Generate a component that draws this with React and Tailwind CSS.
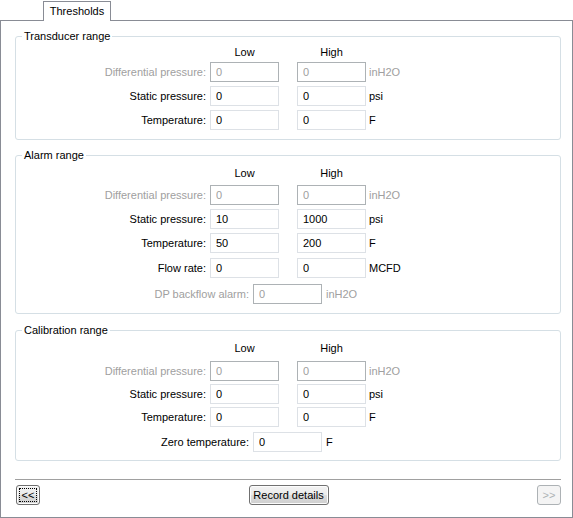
import React from 'react'

const groups = [
  {
    title: 'Transducer range',
    pad: 'pt-[3px] pb-[9px]',
    headGap: 'mb-[3px]',
    rows: [
      { label: 'Differential pressure:', low: '0', high: '0', unit: 'inH2O', disabled: true, mt: '' },
      { label: 'Static pressure:', low: '0', high: '0', unit: 'psi', mt: 'mt-[4px]' },
      { label: 'Temperature:', low: '0', high: '0', unit: 'F', mt: 'mt-[4px]' },
    ],
  },
  {
    title: 'Alarm range',
    pad: 'pt-[5px] pb-[9px]',
    headGap: 'mb-[5px]',
    mt: 'mt-[9px]',
    rows: [
      { label: 'Differential pressure:', low: '0', high: '0', unit: 'inH2O', disabled: true, mt: '' },
      { label: 'Static pressure:', low: '10', high: '1000', unit: 'psi', mt: 'mt-[4px]' },
      { label: 'Temperature:', low: '50', high: '200', unit: 'F', mt: 'mt-[4px]' },
      { label: 'Flow rate:', low: '0', high: '0', unit: 'MCFD', mt: 'mt-[5px]' },
      { label: 'DP backflow alarm:', value: '0', unit: 'inH2O', disabled: true, single: true, mt: 'mt-[6px]' },
    ],
  },
  {
    title: 'Calibration range',
    pad: 'pt-[5px] pb-[8px]',
    headGap: 'mb-[6px]',
    mt: 'mt-[10px]',
    rows: [
      { label: 'Differential pressure:', low: '0', high: '0', unit: 'inH2O', disabled: true, mt: '' },
      { label: 'Static pressure:', low: '0', high: '0', unit: 'psi', mt: 'mt-[3px]' },
      { label: 'Temperature:', low: '0', high: '0', unit: 'F', mt: 'mt-[3px]' },
      { label: 'Zero temperature:', value: '0', unit: 'F', single: true, mt: 'mt-[5px]' },
    ],
  },
]

function Field({ value, disabled }) {
  return (
    <input
      readOnly
      disabled={disabled}
      value={value}
      className={`h-[20px] w-[69px] px-[5px] text-[11px] leading-[18px] outline-none bg-white ${
        disabled ? 'border border-[#adb2b5] text-[#a0a0a0]' : 'border border-[#dde1e6] text-black'
      }`}
    />
  )
}

function Row({ row }) {
  const tone = row.disabled ? 'text-[#a0a0a0]' : 'text-black'
  if (row.single) {
    return (
      <div className={`flex items-center h-[20px] ${row.mt}`}>
        <span className={`w-[233px] text-right ${tone}`}>{row.label}</span>
        <span className="ml-[4px]"><Field value={row.value} disabled={row.disabled} /></span>
        <span className={`ml-[4px] ${tone}`}>{row.unit}</span>
      </div>
    )
  }
  return (
    <div className={`flex items-center h-[20px] ${row.mt}`}>
      <span className={`w-[190px] text-right ${tone}`}>{row.label}</span>
      <span className="ml-[4px]"><Field value={row.low} disabled={row.disabled} /></span>
      <span className="ml-[18px]"><Field value={row.high} disabled={row.disabled} /></span>
      <span className={`ml-[3px] ${tone}`}>{row.unit}</span>
    </div>
  )
}

function Group({ g }) {
  return (
    <fieldset className={`border border-[#d5dfe5] rounded-[3px] ${g.mt || ''}`}>
      <legend className="ml-[6px] px-[2px] leading-[13px] text-black">{g.title}</legend>
      <div className={g.pad}>
        <div className={`flex h-[13px] leading-[13px] text-black ${g.headGap}`}>
          <span className="ml-[194px] w-[69px] text-center">Low</span>
          <span className="ml-[18px] w-[69px] text-center">High</span>
        </div>
        {g.rows.map((r, i) => (
          <Row key={i} row={r} />
        ))}
      </div>
    </fieldset>
  )
}

const btn =
  'h-[20px] border rounded-[3px] text-[11px] flex items-center justify-center'
const btnOn =
  'border-[#707070] text-black bg-[linear-gradient(#f2f2f2,#ebebeb_50%,#dddddd_50%,#cfcfcf)] shadow-[inset_0_0_0_1px_#fcfcfc]'

export default function App() {
  return (
    <div className="w-[573px] h-[518px] bg-white text-[11px] font-['Liberation_Sans',Arial,sans-serif] select-none">
      {/* Tab strip */}
      <div className="flex h-[20px] pl-[43px]">
        <div className="relative z-10 mt-[1px] h-[20px] w-[68px] border-x border-t border-[#898c95] bg-white flex items-center justify-center text-black">
          Thresholds
        </div>
      </div>

      {/* Tab page */}
      <div className="h-[498px] border border-[#898c95] pl-[14px] pr-[11px] pt-[9px] flex flex-col">
        {groups.map((g, i) => (
          <Group key={i} g={g} />
        ))}

        <div className="mt-[18px] h-[2px] border-t border-[#a0a0a0] bg-white" />

        <div className="mt-[4px] flex items-center justify-between pl-px">
          <button className={`${btn} ${btnOn} w-[24px] p-[2px]`}>
            <span className="flex-1 h-full border border-dotted border-black flex items-center justify-center leading-none">
              &lt;&lt;
            </span>
          </button>
          <button className={`${btn} ${btnOn} w-[80px]`}>Record details</button>
          <button className={`${btn} w-[24px] border-[#adb2b5] bg-[#f4f4f4] text-[#adb2b5]`}>&gt;&gt;</button>
        </div>
      </div>
    </div>
  )
}
